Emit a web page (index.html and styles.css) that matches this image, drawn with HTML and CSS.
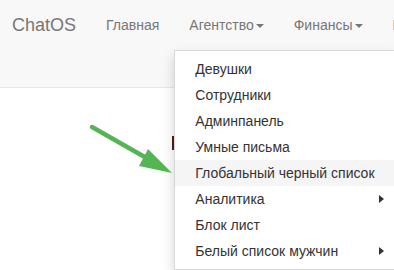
FILE: index.html
```html
<!DOCTYPE html>
<html>
<head>
	<meta charset="utf-8">
	<title>ChatOS</title>
	<link rel="stylesheet" href="styles.css">
</head>
<body>
	<nav class="navbar">
		<a class="brand" href="#">ChatOS</a>
		<ul class="nav">
			<li><a href="#">Главная</a></li>
			<li class="dropdown open">
				<a href="#">Агентство<span class="caret"></span></a>
				<!-- открытое меню -->
				<ul class="dropdown-menu">
					<li><a href="#">Девушки</a></li>
					<li><a href="#">Сотрудники</a></li>
					<li><a href="#">Админпанель</a></li>
					<li><a href="#">Умные письма</a></li>
					<li class="hover"><a href="#">Глобальный черный список</a></li>
					<li class="submenu"><a href="#">Аналитика</a></li>
					<li><a href="#">Блок лист</a></li>
					<li class="submenu"><a href="#">Белый список мужчин</a></li>
				</ul>
			</li>
			<li><a href="#">Финансы<span class="caret"></span></a></li>
			<li><a href="#">Настройки</a></li>
		</ul>
	</nav>

	<div class="content">
		<span class="mark"></span>
	</div>

	<svg class="pointer" width="394" height="270" viewBox="0 0 394 270">
		<line x1="92" y1="127" x2="150" y2="160" stroke="#55b555" stroke-width="4.5" stroke-linecap="round"/>
		<polygon points="148,149 172,173 139,166" fill="#55b555"/>
	</svg>
</body>
</html>
```

FILE: styles.css
```css
body {
	margin: 0;
	font-family: "Liberation Sans", Arial, sans-serif;
	font-size: 14px;
	line-height: 20px;
	color: #333;
	background: #fff;
	overflow: hidden;
	width: 394px;
	height: 270px;
	position: relative;
}

a {
	text-decoration: none;
}

.navbar {
	display: flex;
	align-items: flex-start;
	height: 87px;
	background-color: #f8f8f8;
	border-bottom: 1px solid #e7e7e7;
	white-space: nowrap;
}

.brand {
	padding: 15px 15px 15px 12px;
	font-size: 18px;
	line-height: 20px;
	color: #777;
}

.nav {
	display: flex;
	list-style: none;
	margin: 0;
	padding: 0;
}

.nav > li {
	position: relative;
}

.nav > li > a {
	display: block;
	padding: 15px;
	color: #777;
}

.caret {
	display: inline-block;
	width: 0;
	height: 0;
	margin-left: 2px;
	vertical-align: middle;
	border-top: 4px solid #777;
	border-left: 4px solid transparent;
	border-right: 4px solid transparent;
}

.dropdown-menu {
	position: absolute;
	top: 50px;
	left: 0;
	z-index: 10;
	list-style: none;
	margin: 0;
	padding: 5px 0;
	background-color: #fff;
	border: 1px solid rgba(0, 0, 0, .15);
	box-shadow: 0 6px 12px rgba(0, 0, 0, .175);
}

.dropdown-menu > li > a {
	display: block;
	padding: 3px 20px;
	color: #333;
	white-space: nowrap;
}

.dropdown-menu > li.hover > a {
	background-color: #f5f5f5;
}

.dropdown-menu > li.submenu > a::after {
	content: "";
	float: right;
	width: 0;
	height: 0;
	margin-top: 6px;
	margin-right: -9px;
	border-left: 5px solid #333;
	border-top: 4px solid transparent;
	border-bottom: 4px solid transparent;
}

.content {
	position: relative;
}

.mark {
	position: absolute;
	left: 172px;
	top: 48px;
	width: 2px;
	height: 14px;
	background: #5a1a1a;
}

.pointer {
	position: absolute;
	left: 0;
	top: 0;
	z-index: 20;
}
```
